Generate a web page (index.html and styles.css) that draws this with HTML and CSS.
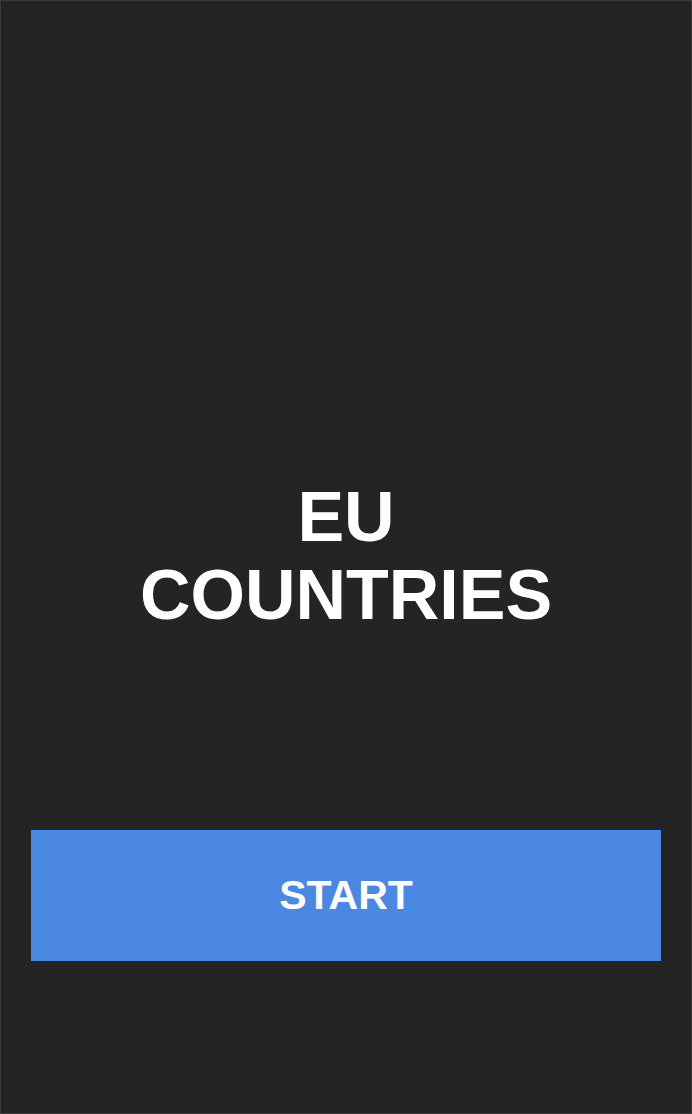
FILE: index.html
```html
<!DOCTYPE html>
<html>
<head>
<meta charset="utf-8">
<link rel="stylesheet" href="styles.css">
</head>
<body>
<div class="screen">
  <h1 class="title">EU<br>COUNTRIES</h1>
  <button class="start">START</button>
</div>
</body>
</html>
```
FILE: styles.css
```css
html, body {
  margin: 0;
  padding: 0;
  background: #242424;
}
.screen {
  box-sizing: border-box;
  width: 692px;
  height: 1114px;
  border: 1px solid #3a3a3a;
  background: #242424;
  display: flex;
  flex-direction: column;
  align-items: stretch;
  padding: 477px 30px 0 30px;
  font-family: "Liberation Sans", Arial, sans-serif;
}
.title {
  margin: 0;
  color: #ffffff;
  font-size: 70px;
  line-height: 78px;
  font-weight: bold;
  text-align: center;
}
.start {
  margin-top: 196px;
  height: 131px;
  border: none;
  background: #4a88e3;
  color: #ffffff;
  font-family: "Liberation Sans", Arial, sans-serif;
  font-size: 41px;
  font-weight: bold;
  padding: 0;
}
```
